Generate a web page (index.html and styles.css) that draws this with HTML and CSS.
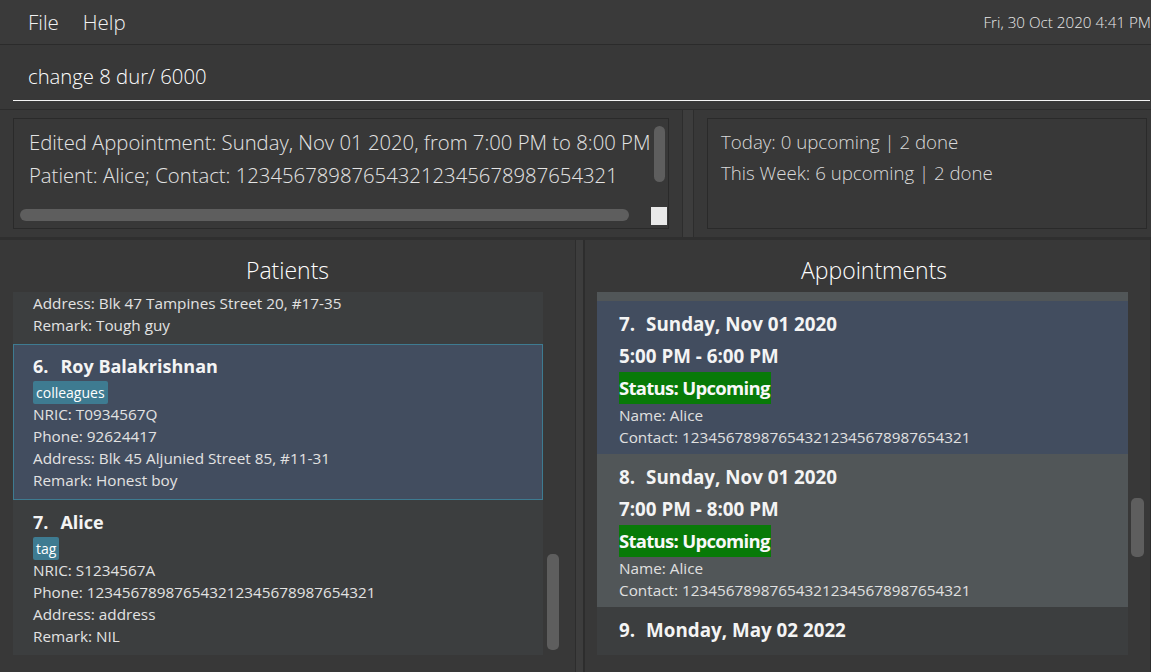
FILE: index.html
```html
<!DOCTYPE html>
<html>
<head>
<meta charset="utf-8">
<link rel="stylesheet" href="styles.css">
</head>
<body>
<div class="app">
  <div class="menubar">
    <span class="menu-item menu-file">File</span>
    <span class="menu-item menu-help">Help</span>
    <span class="clock">Fri, 30 Oct 2020 4:41 PM</span>
  </div>
  <div class="command-row">
    <div class="command-box">change 8 dur/ 6000</div>
  </div>
  <div class="top-row">
    <div class="result-panel">
      <div class="result-box">
        <div class="result-text">
          <div class="result-line">Edited Appointment: Sunday, Nov 01 2020, from 7:00 PM to 8:00 PM</div>
          <div class="result-line">Patient: Alice; Contact: 12345678987654321234567898765432​1</div>
        </div>
        <div class="vscroll-thumb"></div>
        <div class="hscroll-thumb"></div>
        <div class="scroll-corner"></div>
      </div>
    </div>
    <div class="vdivider"></div>
    <div class="stats-panel">
      <div class="stats-box">
        <div class="stats-line">Today: 0 upcoming | 2 done</div>
        <div class="stats-line">This Week: 6 upcoming | 2 done</div>
      </div>
    </div>
  </div>
  <div class="bottom-row">
    <div class="list-panel patients-panel">
      <div class="panel-title">Patients</div>
      <div class="list-wrap">
        <div class="list">
          <div class="card card-dark card-partial">
            <div class="small">Address: Blk 47 Tampines Street 20, #17-35</div>
            <div class="small">Remark: Tough guy</div>
          </div>
          <div class="card card-selected">
            <div class="big"><span class="idx">6.</span>Roy Balakrishnan</div>
            <div class="tags"><span class="tag">colleagues</span></div>
            <div class="small">NRIC: T0934567Q</div>
            <div class="small">Phone: 92624417</div>
            <div class="small">Address: Blk 45 Aljunied Street 85, #11-31</div>
            <div class="small">Remark: Honest boy</div>
          </div>
          <div class="card card-dark">
            <div class="big"><span class="idx">7.</span>Alice</div>
            <div class="tags"><span class="tag">tag</span></div>
            <div class="small">NRIC: S1234567A</div>
            <div class="small">Phone: 12345678987654321234567898765432​1</div>
            <div class="small">Address: address</div>
            <div class="small">Remark: NIL</div>
          </div>
        </div>
        <div class="scroll-track patients-track"><div class="thumb"></div></div>
      </div>
    </div>
    <div class="vdivider vdivider-bottom"></div>
    <div class="list-panel appts-panel">
      <div class="panel-title">Appointments</div>
      <div class="list-wrap">
        <div class="list">
          <div class="appt-stub"></div>
          <div class="appt card-selected">
            <div class="big"><span class="idx">7.</span>Sunday, Nov 01 2020</div>
            <div class="big time">5:00 PM - 6:00 PM</div>
            <div class="status-row"><span class="status">Status: Upcoming</span></div>
            <div class="appt-small">Name: Alice</div>
            <div class="appt-small">Contact: 12345678987654321234567898765432​1</div>
          </div>
          <div class="appt card-light">
            <div class="big"><span class="idx">8.</span>Sunday, Nov 01 2020</div>
            <div class="big time">7:00 PM - 8:00 PM</div>
            <div class="status-row"><span class="status">Status: Upcoming</span></div>
            <div class="appt-small">Name: Alice</div>
            <div class="appt-small">Contact: 12345678987654321234567898765432​1</div>
          </div>
          <div class="appt appt-last card-dark">
            <div class="big"><span class="idx">9.</span>Monday, May 02 2022</div>
          </div>
        </div>
        <div class="scroll-track appts-track"><div class="thumb"></div></div>
      </div>
    </div>
  </div>
</div>
</body>
</html>
```
FILE: styles.css
```css
* { box-sizing: border-box; }
html, body { margin: 0; padding: 0; }
body {
  width: 1151px;
  height: 672px;
  overflow: hidden;
  background: #383838;
  font-family: "Open Sans", "Noto Sans", sans-serif;
  color: #ffffff;
}
.app { display: flex; flex-direction: column; height: 672px; }

.menubar {
  height: 45px;
  display: flex;
  align-items: center;
  border-bottom: 1px solid #2b2b2b;
  background: #3a3a3a;
  white-space: nowrap;
}
.menu-item { font-size: 20.5px; color: #f2f2f2; font-weight: 300; }
.menu-file { margin-left: 28px; }
.menu-help { margin-left: 24px; }
.clock { margin-left: auto; margin-right: 0; font-size: 15.2px; color: #e8e8e8; font-weight: 300; }

.command-row {
  height: 65px;
  padding: 0 1px 0 13px;
  border-bottom: 1px solid #2c2c2c;
}
.command-box {
  height: 56px;
  padding: 18px 0 0 15px;
  line-height: 26px;
  font-size: 20.3px;
  color: #ffffff;
  border-bottom: 1px solid #f4f4f4;
  font-weight: 300;
}

.top-row { display: flex; height: 130px; border-bottom: 3px solid #2f2f2f; }
.result-panel { width: 683px; padding: 8px 13px 8px 13px; border-right: 1px solid #2d2d2d; }
.result-box {
  position: relative;
  height: 100%;
  border: 1px solid #2a2a2a;
  overflow: hidden;
}
.result-text { padding: 7px 0 0 15px; }
.result-line { font-size: 20.3px; line-height: 33px; color: #e4e4e4; white-space: nowrap; font-weight: 300; }
.vscroll-thumb { position: absolute; left: 640px; top: 7px; width: 11px; height: 56px; border-radius: 6px; background: #5e5e5e; }
.hscroll-thumb { position: absolute; left: 6px; top: 90px; width: 609px; height: 12px; border-radius: 6px; background: #5e5e5e; }
.scroll-corner { position: absolute; left: 637px; top: 88px; width: 16px; height: 18px; background: #e9e9e9; }

.vdivider { width: 11px; background: #3d3d3d; border-right: 1px solid #2d2d2d; }
.stats-panel { flex: 1; padding: 8px 4px 8px 13px; }
.stats-box { height: 100%; border: 1px solid #2a2a2a; padding: 7px 0 0 13px; }
.stats-line { font-size: 18.7px; line-height: 31px; color: #dadada; white-space: nowrap; font-weight: 300; }

.bottom-row { flex: 1; display: flex; min-height: 0; }
.list-panel { display: flex; flex-direction: column; border-right: 1px solid #2d2d2d; }
.patients-panel { width: 576px; }
.appts-panel { flex: 1; border-left: 1px solid #2d2d2d; }
.vdivider-bottom { width: 8px; }
.panel-title {
  padding-top: 14px;
  height: 52px;
  line-height: 32px;
  text-align: center;
  font-size: 23px;
  font-weight: 300;
  color: #ffffff;
}
.appts-panel .panel-title { padding-left: 13px; }
.list-wrap { display: flex; height: 363px; }
.patients-panel .list-wrap { padding-left: 13px; }
.appts-panel .list-wrap { padding-left: 12px; }
.list { overflow: hidden; display: flex; flex-direction: column; }
.patients-panel .list { width: 530px; background: #3c3e3f; }
.appts-panel .list { width: 531px; background: #3c3e3f; }

.card { padding: 8px 0 8px 19px; border: 1px solid transparent; }
.card-partial { padding-top: 0; padding-bottom: 7px; border-top: 0; }
.card-dark { background: #3c3e3f; }
.card-light { background: #515658; }
.card-selected { background: #424d5f; border: 1px solid #3e7b91; }
.big { font-size: 18px; font-weight: 700; line-height: 26px; color: #f4f4f4; white-space: nowrap; }
.idx { margin-right: 12px; }
.tags { height: 24px; padding-top: 2px; }
.tag {
  display: inline-block;
  vertical-align: top;
  background: #3e7b91;
  color: #ffffff;
  font-size: 14px;
  height: 23px;
  line-height: 23px;
  padding: 0 3px;
  border-radius: 2px;
}
.small { font-size: 15.3px; line-height: 22px; color: #e2e2e2; white-space: nowrap; }

.appt-stub { height: 9px; background: #515658; flex: none; }
.appt { padding: 9px 0 6px 21px; border: 1px solid transparent; flex: none; height: 153px; }
.appt-last { height: auto; flex: 1; }
.appt .big { font-size: 18.8px; }
.appt .idx { margin-right: 11px; }
.time { margin-top: 6px; }
.status-row { margin-top: 3px; height: 32px; }
.status {
  display: inline-block;
  height: 32px;
  line-height: 32px;
  background: #087a08;
  color: #f8f8f8;
  font-size: 18.5px;
  font-weight: 700;
  letter-spacing: -0.7px;
  padding-right: 1px;
}
.appt-small { font-size: 15.3px; line-height: 22px; color: #e0e0e0; white-space: nowrap; }

.scroll-track { width: 18px; position: relative; }
.thumb { position: absolute; background: #5e5e5e; border-radius: 5px; }
.patients-track .thumb { left: 4px; top: 262px; width: 12px; height: 96px; }
.appts-track .thumb { left: 3px; top: 206px; width: 13px; height: 59px; }
```
